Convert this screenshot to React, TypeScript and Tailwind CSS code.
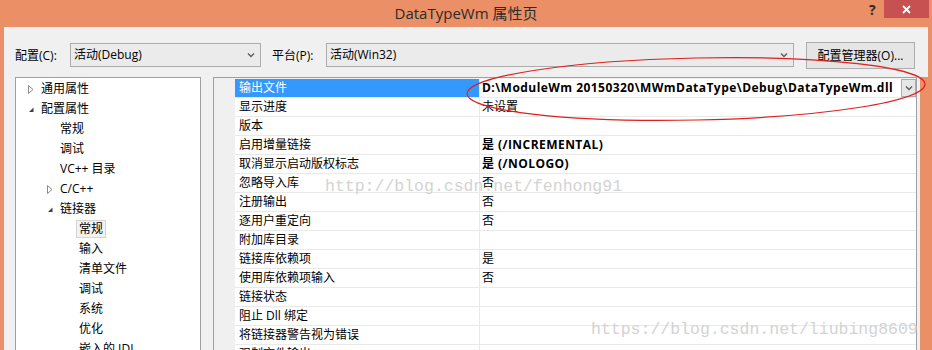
import React from "react";

type Row = { name: string; value: string; bold?: boolean };

const rows: Row[] = [
  { name: "输出文件", value: "D:\\ModuleWm 20150320\\MWmDataType\\Debug\\DataTypeWm.dll", bold: true },
  { name: "显示进度", value: "未设置" },
  { name: "版本", value: "" },
  { name: "启用增量链接", value: "是 (/INCREMENTAL)", bold: true },
  { name: "取消显示启动版权标志", value: "是 (/NOLOGO)", bold: true },
  { name: "忽略导入库", value: "否" },
  { name: "注册输出", value: "否" },
  { name: "逐用户重定向", value: "否" },
  { name: "附加库目录", value: "" },
  { name: "链接库依赖项", value: "是" },
  { name: "使用库依赖项输入", value: "否" },
  { name: "链接状态", value: "" },
  { name: "阻止 Dll 绑定", value: "" },
  { name: "将链接器警告视为错误", value: "" },
  { name: "强制文件输出", value: "" },
];

type Node = { label: string; level: number; toggle?: "open" | "closed"; selected?: boolean };

const tree: Node[] = [
  { label: "通用属性", level: 0, toggle: "closed" },
  { label: "配置属性", level: 0, toggle: "open" },
  { label: "常规", level: 1 },
  { label: "调试", level: 1 },
  { label: "VC++ 目录", level: 1 },
  { label: "C/C++", level: 1, toggle: "closed" },
  { label: "链接器", level: 1, toggle: "open" },
  { label: "常规", level: 2, selected: true },
  { label: "输入", level: 2 },
  { label: "清单文件", level: 2 },
  { label: "调试", level: 2 },
  { label: "系统", level: 2 },
  { label: "优化", level: 2 },
  { label: "嵌入的 IDL", level: 2 },
];

const indent = ["pl-[12px]", "pl-[31px]", "pl-[50px]"];

const Chevron = () => (
  <svg width="8" height="6" viewBox="0 0 8 6" className="shrink-0">
    <path d="M1 1.5 L4 4.5 L7 1.5" fill="none" stroke="#5f5f5f" strokeWidth="1.4" />
  </svg>
);

const Toggle = ({ kind }: { kind?: "open" | "closed" }) => {
  if (kind === "closed")
    return (
      <svg width="6" height="9" viewBox="0 0 6 9" className="shrink-0">
        <path d="M0.5 0.5 L5 4.5 L0.5 8.5 Z" fill="none" stroke="#8a8a8a" strokeWidth="1" />
      </svg>
    );
  if (kind === "open")
    return (
      <svg width="6" height="9" viewBox="0 0 6 9" className="shrink-0">
        <path d="M5.5 2.5 L5.5 7 L1 7 Z" fill="#404040" />
      </svg>
    );
  return <span className="w-[6px] shrink-0" />;
};

export default function App() {
  return (
    <div
      className="relative w-[932px] h-[350px] overflow-hidden bg-[#EA8F66] flex flex-col text-[12px] text-black"
      style={{ fontFamily: '"Open Sans", "Noto Sans CJK SC", sans-serif' }}
    >
      {/* title bar */}
      <div className="h-[27px] flex items-start shrink-0">
        <div className="w-[72px]" />
        <div className="flex-1 text-center text-[15px] leading-[26px] text-[#2b2b2b]">DataTypeWm 属性页</div>
        <div className="w-[72px] flex items-start">
          <span className="w-[24px] pl-[9px] pt-[1px] text-[14px] font-bold leading-[18px] text-[#2b2b2b]">?</span>
          <div className="w-[45px] h-[18px] bg-[#C75050] flex items-center justify-center">
            <svg width="9" height="9" viewBox="0 0 9 9">
              <path d="M1 1 L8 8 M8 1 L1 8" stroke="#fff" strokeWidth="1.8" />
            </svg>
          </div>
        </div>
      </div>

      {/* client */}
      <div className="flex-1 ml-[4px] mr-[4px] bg-[#F0F0F0] flex flex-col">
        {/* config row */}
        <div className="h-[50px] flex items-start pt-[15px] pl-[11px] shrink-0">
          <span className="mt-[5px] w-[55px]">配置(C):</span>
          <div className="mt-[1px] w-[191px] h-[24px] border border-[#ACACAC] bg-[#EBEBEB] flex items-center pl-[3px] pr-[5px]">
            <span className="flex-1">活动(Debug)</span>
            <Chevron />
          </div>
          <span className="mt-[5px] ml-[11px] w-[54px]">平台(P):</span>
          <div className="mt-[1px] w-[468px] h-[24px] border border-[#ACACAC] bg-[#EBEBEB] flex items-center pl-[3px] pr-[5px]">
            <span className="flex-1">活动(Win32)</span>
            <Chevron />
          </div>
          <div className="ml-[12px] w-[109px] h-[27px] border border-[#ADADAD] bg-[#E5E5E5] flex items-center justify-center">
            配置管理器(O)...
          </div>
        </div>

        {/* panes */}
        <div className="flex-1 flex items-stretch min-h-0">
          <div className="ml-[11px] w-[186px] border-t border-x border-[#A0A0A0] bg-white pt-[1px] overflow-hidden">
            {tree.map((n, i) => (
              <div key={i} className={`h-[20px] flex items-center ${indent[n.level]}`}>
                <Toggle kind={n.toggle} />
                {n.selected ? (
                  <span className="ml-[4px] px-[2px] h-[18px] leading-[16px] border border-[#D5D5D5] bg-[#F2F2F2] whitespace-nowrap">
                    {n.label}
                  </span>
                ) : (
                  <span className="ml-[7px] whitespace-nowrap">{n.label}</span>
                )}
              </div>
            ))}
          </div>

          <div className="ml-[12px] w-[704px] border-t border-x border-[#A0A0A0] bg-[#F0F0F0] flex overflow-hidden">
            <div className="w-[21px] shrink-0" />
            <div className="flex-1 pt-[1px] bg-[#F0F0F0]">
              {rows.map((r, i) => (
                <div key={i} className="h-[19px] flex border-b border-[#E9E9E9] bg-white">
                  <div
                    className={`w-[245px] shrink-0 pl-[4px] leading-[18px] whitespace-nowrap border-r border-[#E9E9E9] ${
                      i === 0 ? "bg-[#3399FF] text-white" : ""
                    }`}
                  >
                    {r.name}
                  </div>
                  <div className={`flex-1 flex items-center pl-[2px] ${r.bold ? "font-bold tracking-[0.45px]" : ""}`}>
                    <span className="flex-1 whitespace-nowrap leading-[18px]">{r.value}</span>
                    {i === 0 && (
                      <div className="w-[15px] h-[18px] border border-[#ACACAC] bg-[#E6E6E6] flex items-center justify-center">
                        <Chevron />
                      </div>
                    )}
                  </div>
                </div>
              ))}
            </div>
          </div>
          <div className="ml-[3px] flex-1 bg-[#EA8F66]" />
        </div>
      </div>

      {/* watermarks */}
      <div
        className="absolute left-[325px] top-[176px] text-[16.5px] leading-[22px] text-[#d3d3d3] pointer-events-none"
        style={{ fontFamily: '"Liberation Mono", monospace' }}
      >
        http://blog.csdn.net/fenhong91
      </div>
      <div
        className="absolute left-[591px] top-[319px] text-[16.5px] leading-[22px] text-[#d3d3d3] pointer-events-none"
        style={{ fontFamily: '"Liberation Mono", monospace' }}
      >
        https://blog.csdn.net/liubing8609
      </div>

      {/* red annotation */}
      <svg className="absolute inset-0 pointer-events-none" width="932" height="350">
        <ellipse cx="696" cy="89" rx="229" ry="31" fill="none" stroke="#E02020" strokeWidth="1.2" transform="rotate(-1.2 696 89)" />
      </svg>
    </div>
  );
}
